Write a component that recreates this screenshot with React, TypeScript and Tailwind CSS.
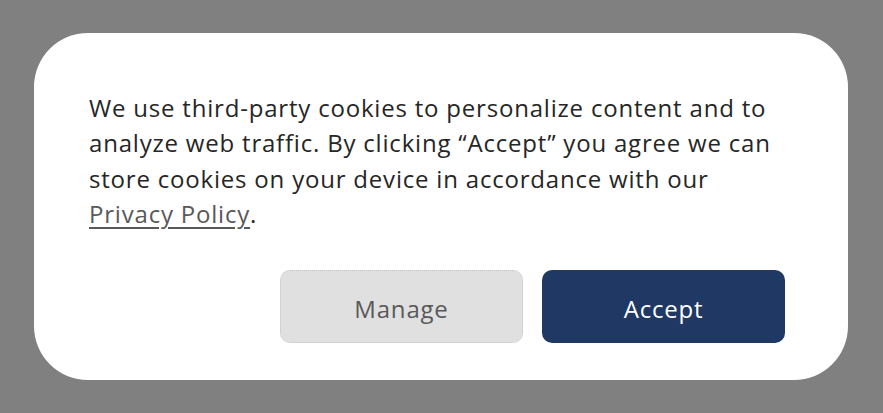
// Cookie consent dialog
export default function App() {
  return (
    <div className="flex h-[413px] w-[883px] items-start bg-[#808080] px-[34px] pt-[33px] font-['Open_Sans',sans-serif]">
      <div className="flex h-[347px] w-[814px] flex-col rounded-[54px] bg-white pl-[55px] pr-[63px] pt-[57px]">
        <p className="whitespace-nowrap text-[24px] leading-[35.3px] tracking-[0.8px] text-[#262626]">
          We use third-party cookies to personalize content and to
          <br />
          analyze web traffic. By clicking “Accept” you agree we can
          <br />
          store cookies on your device in accordance with our
          <br />
          <a href="#" className="text-[#595959] underline decoration-[1.5px] underline-offset-[4px]">
            Privacy Policy
          </a>
          .
        </p>
        <div className="mt-auto mb-[37px] flex justify-end gap-[19px]">
          <button className="h-[73px] w-[243px] rounded-[10px] border border-dotted border-[#c4c4c4] bg-[#e0e0e0] pt-1 text-[24px] tracking-[0.8px] text-[#595959]">
            Manage
          </button>
          <button className="h-[73px] w-[243px] rounded-[10px] bg-[#203864] pt-1 text-[24px] tracking-[0.8px] text-white">
            Accept
          </button>
        </div>
      </div>
    </div>
  );
}
